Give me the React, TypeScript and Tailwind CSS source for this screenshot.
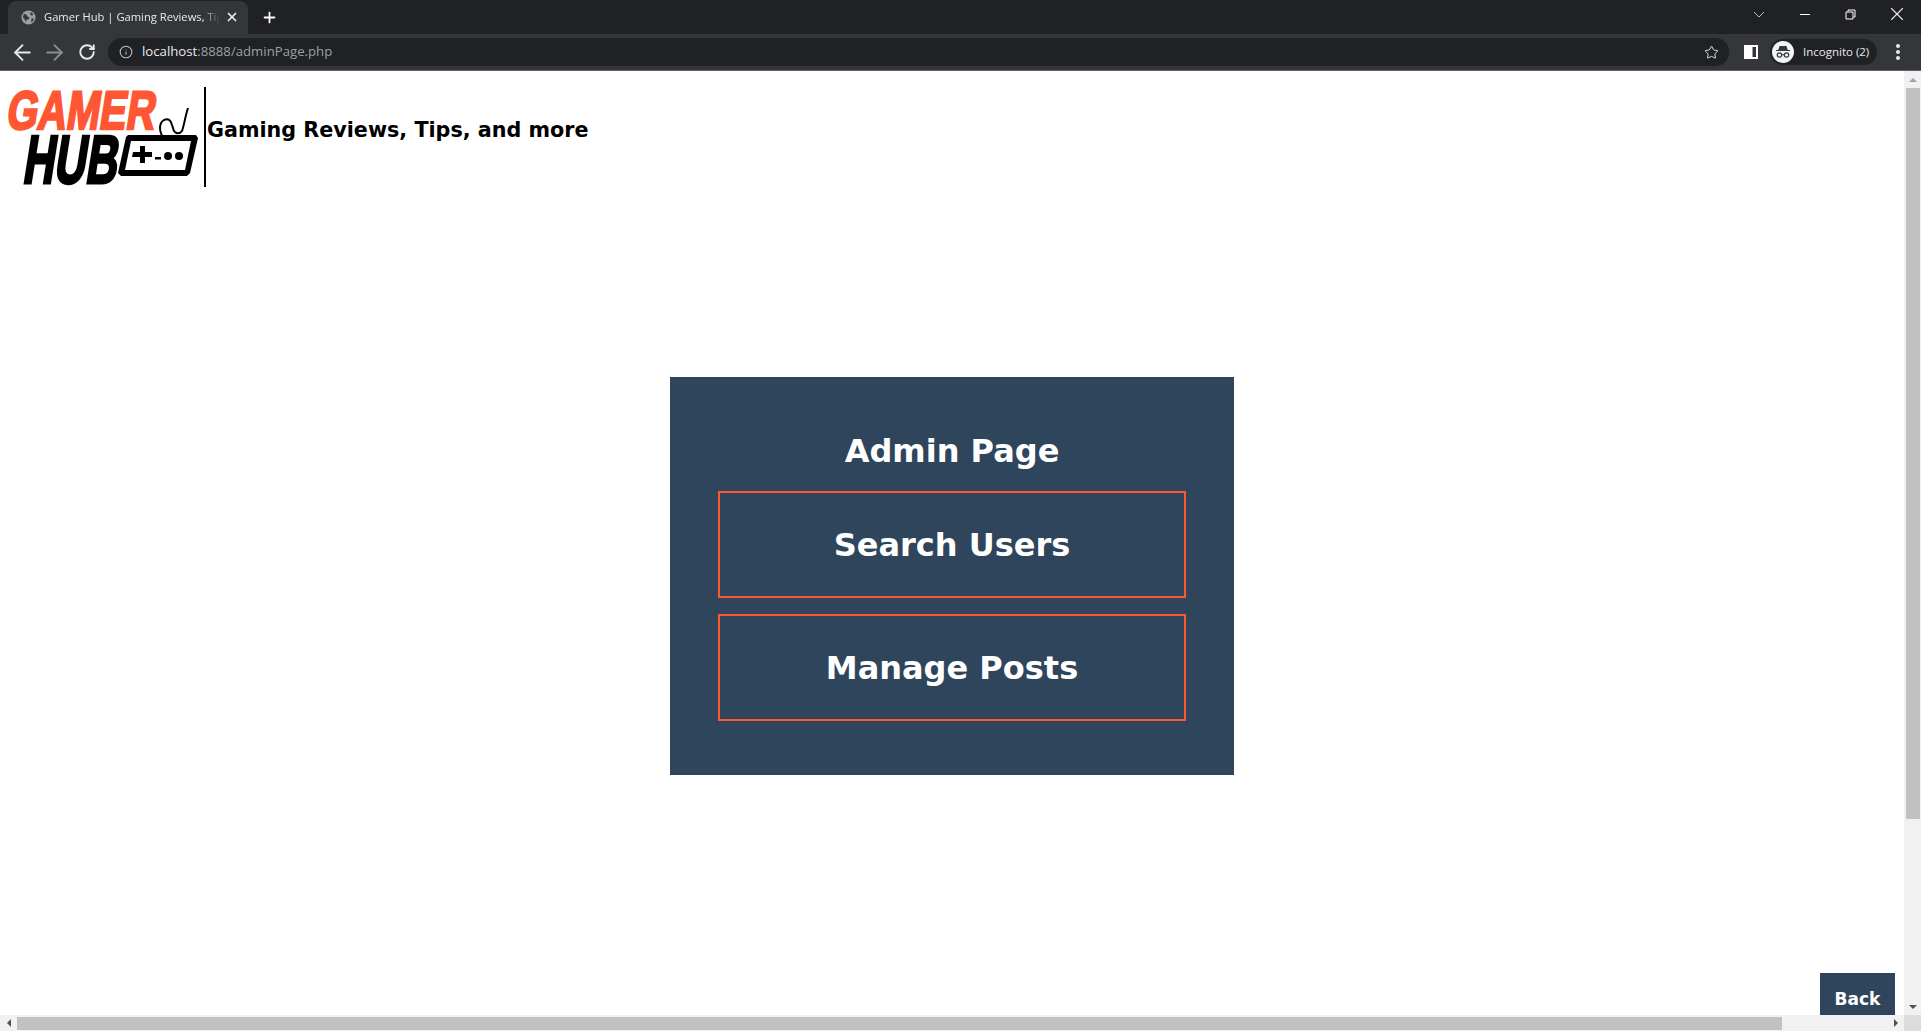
import { ArrowLeft, ArrowRight, Info, Plus, RotateCw, Star, X } from "lucide-react";

const PAGE_FONT = "font-['DejaVu_Sans',Verdana,sans-serif]";

function Logo() {
  return (
    <svg width="201" height="100" viewBox="0 0 201 100" className="shrink-0">
      <text
        x="9"
        y="42"
        textLength="148"
        lengthAdjust="spacingAndGlyphs"
        fill="#ff5733"
        stroke="#ff5733"
        strokeWidth="2.500"
        transform="skewX(-9)"
        fontFamily="'Liberation Sans', sans-serif"
        fontWeight="700"
        fontSize="54"
      >
        GAMER
      </text>
      <text
        x="34"
        y="96"
        textLength="94"
        lengthAdjust="spacingAndGlyphs"
        fill="#000"
        stroke="#000"
        strokeWidth="3"
        transform="skewX(-9)"
        fontFamily="'Liberation Sans', sans-serif"
        fontWeight="700"
        fontSize="68"
      >
        HUB
      </text>
      {/* controller */}
      <path
        d="M159 49c-3-6-3-13 2-16 4-2 7 0 8 5l2 6c2 3 6 3 8 0 2-5 3-14 6-23"
        fill="none"
        stroke="#000"
        strokeWidth="2"
      />
      <path d="M125 48h68l2 3-8 35-3 3h-66l-3-3 8-36z" fill="#000" />
      <path d="M128 54h60l-6 29h-60z" fill="#fff" />
      <path d="M130 65h7v-6h5v6h7v5h-7v6h-5v-6h-8z" fill="#000" />
      <rect x="152" y="70" width="6" height="2.500" fill="#000" />
      <circle cx="165" cy="69" r="4" fill="#000" />
      <circle cx="176" cy="69" r="4" fill="#000" />
    </svg>
  );
}

function IncognitoIcon() {
  return (
    <svg width="22" height="22" viewBox="0 0 22 22" className="shrink-0">
      <circle cx="11" cy="11" r="11" fill="#f1f3f4" />
      <path d="M7.500 5h7l1.200 4H18v1H4V9h2.300z" fill="#35363a" />
      <circle cx="7.500" cy="14" r="2.200" fill="none" stroke="#35363a" strokeWidth="1.200" />
      <circle cx="14.500" cy="14" r="2.200" fill="none" stroke="#35363a" strokeWidth="1.200" />
      <path d="M9.700 13.800h2.600" stroke="#35363a" strokeWidth="1" />
    </svg>
  );
}

function BrowserChrome() {
  return (
    <div className="shrink-0 font-['Open_Sans',sans-serif]">
      <div className="flex h-[34px] items-end bg-[#202124] pl-2">
        <div className="flex h-[33px] w-[240px] items-center rounded-t-lg bg-[#35363a] pb-[1px] pl-[13px] pr-[9px] text-[11.200px] text-[#e8eaed]">
          <svg width="15" height="15" viewBox="0 0 16 16" className="shrink-0">
            <circle cx="8" cy="8" r="7.500" fill="#9aa0a6" />
            <path d="M3 4l3 1 1 2 2 1-1 2-2 0-1 3-1-3-2-2zM10 2l3 2-1 2-2-1zM11 9h3l-2 4-1 0z" fill="#35363a" />
          </svg>
          <span className="ml-[8px] w-[176px] overflow-hidden whitespace-nowrap [mask-image:linear-gradient(to_right,black_90%,transparent)]">
            Gamer Hub | Gaming Reviews, Tips
          </span>
          <X size={14} strokeWidth={3} className="ml-auto shrink-0" />
        </div>
        <Plus size={17} strokeWidth={2.500} className="mb-[8px] ml-[13px] text-white" />
        <div className="mb-[9px] ml-auto flex items-center text-[#e8eaed]">
          <svg width="12" height="7" viewBox="0 0 12 7" className="mr-[35px]">
            <path d="M1 1l5 5 5-5" fill="none" stroke="#bdc1c6" strokeWidth="1" />
          </svg>
          <div className="mr-[35px] h-px w-[10px] bg-white" />
          <svg width="11" height="11" viewBox="0 0 11 11" className="mr-[30px]">
            <path d="M3 2.500V1h7v7H8.500M1 3h7v7H1z" fill="none" stroke="#fff" strokeWidth="1" />
          </svg>
          <X size={22} strokeWidth={1.200} className="mr-[13px]" />
        </div>
      </div>
      <div className="flex h-[37px] items-center border-b border-[#5f6368] bg-[#35363a] pl-[10px]">
        <ArrowLeft size={25} strokeWidth={1.800} className="shrink-0 text-[#e8eaed]" />
        <ArrowRight size={25} strokeWidth={1.800} className="ml-[7px] shrink-0 text-[#8a8d91]" />
        <RotateCw size={18} strokeWidth={2.500} className="ml-[11px] shrink-0 text-[#e8eaed]" />
        <div className="ml-[12px] flex h-[28px] w-[1621px] items-center rounded-full bg-[#202124] pl-[11px] pr-[10px] text-[13.200px]">
          <Info size={14} strokeWidth={1.800} className="text-[#bdc1c6]" />
          <span className="ml-[9px] text-[#e8eaed]">localhost</span>
          <span className="text-[#9aa0a6]">:8888/adminPage.php</span>
          <Star size={15} strokeWidth={1.500} className="ml-auto text-[#e8eaed]" />
        </div>
        <svg width="14" height="14" viewBox="0 0 14 14" className="ml-[15px] shrink-0">
          <path d="M0 0h14v14H0z" fill="#fff" />
          <path d="M8.500 2H12v10H8.500z" fill="#35363a" />
        </svg>
        <div className="ml-[12px] flex h-[26px] w-[107px] items-center rounded-full bg-[#202124] pl-[2px] text-[11.500px] text-[#e8eaed]">
          <IncognitoIcon />
          <span className="ml-[9px] whitespace-nowrap">Incognito (2)</span>
        </div>
        <div className="ml-[19px] flex flex-col gap-[2.500px]">
          <div className="size-[3.500px] rounded-full bg-[#e8eaed]" />
          <div className="size-[3.500px] rounded-full bg-[#e8eaed]" />
          <div className="size-[3.500px] rounded-full bg-[#e8eaed]" />
        </div>
      </div>
    </div>
  );
}

function AdminButton({ label }: { label: string }) {
  return (
    <a className="flex h-[107px] w-full items-center justify-center border-2 border-[#ff5733] text-[32px] font-bold text-white">
      {label}
    </a>
  );
}

export default function App() {
  return (
    <div className="flex h-[1031px] w-full flex-col overflow-hidden bg-white">
      <BrowserChrome />
      <div className="flex min-h-0 flex-1">
        <div className="flex min-w-0 flex-1 flex-col">
          <main className={`flex min-h-0 flex-1 flex-col overflow-hidden ${PAGE_FONT}`}>
            <header className="flex items-center pl-[3px] pt-[16px]">
              <Logo />
              <div className="h-[100px] w-[2px] bg-black" />
              <h2 className="mb-[12px] ml-[1px] text-[20.700px] font-bold text-black">Gaming Reviews, Tips, and more</h2>
            </header>
            <section className="ml-[670px] mt-[190px] flex h-[398px] w-[564px] flex-col items-center bg-[#2f455c] px-[48px] pt-[54px]">
              <h1 className="text-[32px] font-bold leading-[40px] text-white">Admin Page</h1>
              <div className="mt-[20px] flex w-full flex-col gap-[16px]">
                <AdminButton label="Search Users" />
                <AdminButton label="Manage Posts" />
              </div>
            </section>
            <a className="mr-[9px] mt-auto flex h-[42px] w-[75px] items-center justify-center self-end bg-[#2f455c] pt-[11px] text-[17px] font-bold text-white">
              Back
            </a>
          </main>
          {/* horizontal scrollbar */}
          <div className="flex h-[16px] shrink-0 items-center bg-[#f1f1f1]">
            <div className="flex w-[17px] justify-center">
              <div className="h-0 w-0 border-y-[4px] border-r-[4px] border-y-transparent border-r-[#505050]" />
            </div>
            <div className="h-[13px] w-[1765px] bg-[#c1c1c1]" />
            <div className="ml-auto flex w-[17px] justify-center">
              <div className="h-0 w-0 border-y-[4px] border-l-[4px] border-y-transparent border-l-[#505050]" />
            </div>
          </div>
        </div>
        {/* vertical scrollbar */}
        <div className="flex w-[17px] shrink-0 flex-col bg-[#f1f1f1]">
          <div className="flex h-[17px] items-center justify-center">
            <div className="h-0 w-0 border-x-[4px] border-b-[4px] border-x-transparent border-b-[#a3a3a3]" />
          </div>
          <div className="mx-auto h-[731px] w-[14px] bg-[#c1c1c1]" />
          <div className="mt-auto flex h-[17px] items-center justify-center">
            <div className="h-0 w-0 border-x-[4px] border-t-[4px] border-x-transparent border-t-[#505050]" />
          </div>
          <div className="h-[16px] bg-[#dcdcdc]" />
        </div>
      </div>
    </div>
  );
}
